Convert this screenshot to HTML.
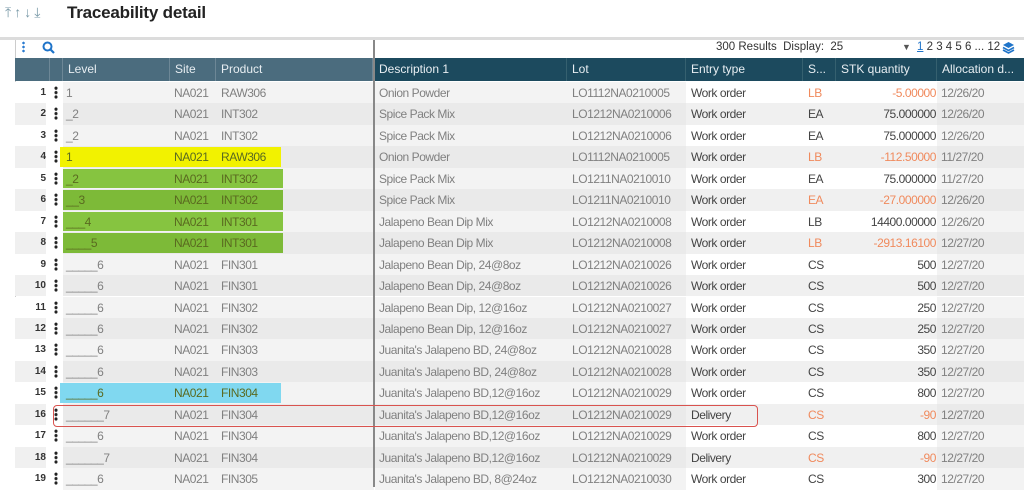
<!DOCTYPE html>
<html><head><meta charset="utf-8"><style>
*{margin:0;padding:0;box-sizing:border-box}
body{width:1024px;height:487px;overflow:hidden;background:#fff;font-family:"Liberation Sans",sans-serif;position:relative;font-size:12px}
.a{position:absolute;white-space:nowrap}
.hd{position:absolute;top:58px;height:23px;color:#e8eef2;font-size:12px;line-height:23px;padding-left:5px;border-right:1px solid #6d8796}
.row{position:absolute;left:15px;width:1009px;height:21.45px;line-height:22.5px;color:#808080;letter-spacing:-0.45px}
.row div{position:absolute;top:0;height:100%;white-space:nowrap}
.n{left:0;width:31px;text-align:right;font-weight:bold;color:#333;font-size:10px;background:#fff;letter-spacing:0}
.d{left:39px;width:4px;top:4px!important;height:13px!important;background:radial-gradient(circle,#222 1.5px,transparent 1.7px) 0 0/4px 4.4px repeat-y}
.tx{background:#f3f3f3}
.e .tx{background:#eaeaea}
.e .n{background:#f0f0f0}
.wh{background:#fff}
.e .wh{background:#f0f0f0}
.dk{color:#444}
.or{color:#f08a5d}
</style></head><body>
<div class="a" style="left:5px;top:4px;color:#7a9aa8;font-size:14px;letter-spacing:3px">⤒↑↓⤓</div>
<div class="a" style="left:67px;top:3px;font-size:17px;font-weight:bold;color:#222;letter-spacing:-0.2px">Traceability detail</div>
<div class="a" style="left:0;top:37px;width:1024px;height:3px;background:#dcdcdc"></div>
<div class="a" style="left:15px;top:40px;width:1px;height:447px;background:#ccc"></div>
<div class="a" style="left:22px;top:41px;width:3px;height:12px;background:radial-gradient(circle,#2a7bd0 1.2px,transparent 1.4px) 0 0/3px 4px repeat-y"></div>
<svg class="a" style="left:42px;top:41px" width="13" height="13"><circle cx="5.5" cy="5.5" r="4" fill="none" stroke="#1f74c9" stroke-width="2"/><path d="M8.5 8.5L12 12" stroke="#1f74c9" stroke-width="2.2"/></svg>
<div class="a" style="left:716px;top:41px;color:#333;font-size:11.5px">300 Results&nbsp; Display:&nbsp; 25</div>
<div class="a" style="left:902px;top:42px;color:#555;font-size:9px">▼</div>
<div class="a" style="left:917px;top:41px;color:#333;font-size:11.5px"><u style="color:#1f74c9">1</u> 2 3 4 5 6 ... 12</div>
<svg class="a" style="left:1002px;top:41px" width="13" height="13"><path d="M6.5 1L12 4 6.5 7 1 4z" fill="#1f74c9"/><path d="M1 6.5l5.5 3 5.5-3M1 9l5.5 3 5.5-3" fill="none" stroke="#1f74c9" stroke-width="1.6"/></svg>
<div class="a" style="left:15px;top:58px;width:359px;height:23px;background:#4b6c7e"></div>
<div class="a" style="left:374px;top:58px;width:650px;height:23px;background:#1c4a5e"></div>
<div class="hd" style="left:15px;width:35px"></div>
<div class="hd" style="left:50px;width:13px"></div>
<div class="hd" style="left:63px;width:107px">Level</div>
<div class="hd" style="left:170px;width:46px">Site</div>
<div class="hd" style="left:216px;width:157px">Product</div>
<div class="hd" style="left:374px;width:193px;border-color:#35606f">Description 1</div>
<div class="hd" style="left:567px;width:119px;border-color:#35606f">Lot</div>
<div class="hd" style="left:686px;width:117px;border-color:#35606f">Entry type</div>
<div class="hd" style="left:803px;width:33px;border-color:#35606f">S...</div>
<div class="hd" style="left:836px;width:101px;border-color:#35606f">STK quantity</div>
<div class="hd" style="left:937px;width:87px;border:0">Allocation d...</div>
<div id="rows"></div>
<div class="a" style="left:373px;top:40px;width:1.5px;height:447px;background:#888"></div>
<div class="a" style="left:53px;top:405px;width:705px;height:22px;border:1.5px solid #d9534f;border-radius:4px"></div>
<script>
const D=[
["1","RAW306","Onion Powder","LO1112NA0210005","Work order","LB","-5.00000","12/26/20",1],
["_2","INT302","Spice Pack Mix","LO1212NA0210006","Work order","EA","75.000000","12/26/20",0],
["_2","INT302","Spice Pack Mix","LO1212NA0210006","Work order","EA","75.000000","12/26/20",0],
["1","RAW306","Onion Powder","LO1112NA0210005","Work order","LB","-112.50000","11/27/20",1,"#f2f200"],
["_2","INT302","Spice Pack Mix","LO1211NA0210010","Work order","EA","75.000000","11/27/20",0,"#86c440"],
["__3","INT302","Spice Pack Mix","LO1211NA0210010","Work order","EA","-27.000000","12/26/20",1,"#7dba38"],
["___4","INT301","Jalapeno Bean Dip Mix","LO1212NA0210008","Work order","LB","14400.00000","12/26/20",0,"#86c440"],
["____5","INT301","Jalapeno Bean Dip Mix","LO1212NA0210008","Work order","LB","-2913.16100","12/27/20",1,"#7dba38"],
["_____6","FIN301","Jalapeno Bean Dip, 24@8oz","LO1212NA0210026","Work order","CS","500","12/27/20",0],
["_____6","FIN301","Jalapeno Bean Dip, 24@8oz","LO1212NA0210026","Work order","CS","500","12/27/20",0],
["_____6","FIN302","Jalapeno Bean Dip, 12@16oz","LO1212NA0210027","Work order","CS","250","12/27/20",0],
["_____6","FIN302","Jalapeno Bean Dip, 12@16oz","LO1212NA0210027","Work order","CS","250","12/27/20",0],
["_____6","FIN303","Juanita's Jalapeno BD, 24@8oz","LO1212NA0210028","Work order","CS","350","12/27/20",0],
["_____6","FIN303","Juanita's Jalapeno BD, 24@8oz","LO1212NA0210028","Work order","CS","350","12/27/20",0],
["_____6","FIN304","Juanita's Jalapeno BD,12@16oz","LO1212NA0210029","Work order","CS","800","12/27/20",0,"#80d8f0"],
["______7","FIN304","Juanita's Jalapeno BD,12@16oz","LO1212NA0210029","Delivery","CS","-90","12/27/20",1],
["_____6","FIN304","Juanita's Jalapeno BD,12@16oz","LO1212NA0210029","Work order","CS","800","12/27/20",0],
["______7","FIN304","Juanita's Jalapeno BD,12@16oz","LO1212NA0210029","Delivery","CS","-90","12/27/20",1],
["_____6","FIN305","Juanita's Jalapeno BD, 8@24oz","LO1212NA0210030","Work order","CS","300","12/27/20",0]];
let h="";D.forEach((r,i)=>{const t=82+i*21.45;const hl=r[9];
h+=`<div class="row ${i%2?'e':''}" style="top:${t}px">
<div class="n">${i+1}</div>
<div class="tx" style="left:48px;width:311px"></div>
${hl?`<div style="left:${i==3||i==14?45:48}px;width:${i==3||i==14?221:220}px;background:${hl};top:1px;height:calc(100% - 2px)"></div>`:''}
<div class="d"></div>
<div style="left:51px;${hl?'color:#5a6a20':''}">${r[0]}</div>
<div style="left:159px;${hl?'color:#5a6a20':''}">NA021</div>
<div style="left:206px;${hl?'color:#5a6a20':''}">${r[1]}</div>
<div class="tx" style="left:360px;width:311px;padding-left:4px">${r[2]}</div>
<div style="left:557px">${r[3]}</div>
<div class="wh dk" style="left:671px;width:251px;padding-left:5px">${r[4]}</div>
<div class="${r[8]?'or':'dk'}" style="left:793px">${r[5]}</div>
<div class="${r[8]?'or':'dk'}" style="left:821px;width:100px;text-align:right">${r[6]}</div>
<div class="tx" style="left:922px;width:87px;padding-left:4px">${r[7]}</div></div>`});
document.getElementById("rows").innerHTML=h;
</script>
</body></html>
